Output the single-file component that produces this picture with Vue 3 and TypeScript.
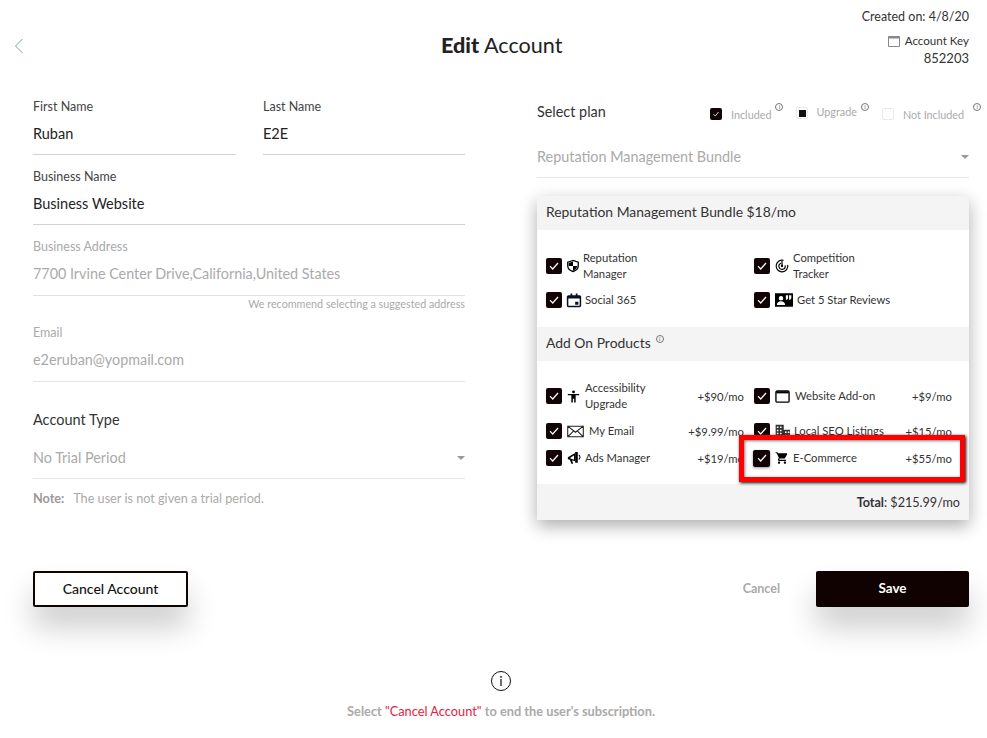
<script setup lang="ts">
type Shape = { d: string; fill?: string; stroke?: string; sw?: number }
type Item = { name: string; lines: string[]; price?: string; gap: number; size: number; icon: Shape[] }

const icons: Record<string, Shape[]> = {
  shield: [
    { d: 'M12 1 1.500 4.500v7c0 5.500 4.500 9.800 10.500 11.500 6-1.700 10.500-6 10.500-11.500v-7z', fill: 'none', stroke: '#000', sw: 2.600 },
    { d: 'M12 3v9H3.500V6zM12 12h8.500c-.3 4.300-3.800 7.800-8.500 9.300z', fill: '#000' },
  ],
  calendar: [
    { d: 'M2.500 5h19a1.500 1.500 0 0 1 1.500 1.500V21.500a1.500 1.500 0 0 1-1.500 1.500h-19A1.500 1.500 0 0 1 1 21.500V6.500A1.500 1.500 0 0 1 2.500 5z', fill: 'none', stroke: '#0a1020', sw: 2.600 },
    { d: 'M1 5h22v4.500H1zM6 1h3v5H6zM15 1h3v5h-3zM14 15h5.500v5H14z', fill: '#0a1020' },
  ],
  radar: [
    { d: 'M14.500 2.300A10 10 0 1 0 21.800 10', fill: 'none', stroke: '#000', sw: 2 },
    { d: 'M10.500 7.200A5.400 5.400 0 1 0 17.300 11', fill: 'none', stroke: '#000', sw: 2 },
    { d: 'M12 3.500v8', fill: 'none', stroke: '#000', sw: 2 },
    { d: 'M12 10a2 2 0 1 1 0 4 2 2 0 0 1 0-4z', fill: '#000' },
  ],
  reviews: [
    { d: 'M0 3h24v18H0z', fill: '#000' },
    { d: 'M8 6.500a3 3 0 1 1 0 6 3 3 0 0 1 0-6zM2.500 18.500c0-3 2.700-4.800 5.500-4.800s5.500 1.800 5.500 4.800zM14.500 5.500h3v4l-1.500 2h-1.500zM18.800 5.500h3v4l-1.500 2h-1.500z', fill: '#fff' },
  ],
  person: [
    { d: 'M12 1a2.600 2.600 0 1 1 0 5.200A2.600 2.600 0 0 1 12 1zM1.500 7.500h21v2.400H16V23h-2.800v-7h-2.400v7H8V9.900H1.500z', fill: '#000' },
  ],
  mail: [
    { d: 'M1 4.500h22v15H1zM1 4.500l11 8.500 11-8.500M1 19.500l8.500-8.500M23 19.500 14.500 11', fill: 'none', stroke: '#222', sw: 1.500 },
  ],
  horn: [
    { d: 'M1.500 10.500 14 3.500v14L1.500 14z', fill: '#000' },
    { d: 'M6 11 12 7.500v7.500L6 13z', fill: '#fff' },
    { d: 'M14 1.500h4.500V20H14zM5 15l2.500 7h3L8.500 15.500z', fill: '#000' },
    { d: 'M20 7c3 1 3 6 0 7', fill: 'none', stroke: '#000', sw: 1.800 },
  ],
  website: [
    { d: 'M3.500 3h17a2 2 0 0 1 2 2v14a2 2 0 0 1-2 2h-17a2 2 0 0 1-2-2V5a2 2 0 0 1 2-2z', fill: 'none', stroke: '#000', sw: 2.200 },
    { d: 'M2 3.500h20V7H2z', fill: '#000' },
  ],
  building: [
    { d: 'M1 1h13v22H1zM14 9h10v14H14z', fill: '#333' },
    { d: 'M3 4h2.500v2.500H3zM8 4h2.500v2.500H8zM3 9h2.500v2.500H3zM8 9h2.500v2.500H8zM3 14h2.500v2.500H3zM8 14h2.500v2.500H8zM3 19h2.500v2.500H3zM8 19h2.500v2.500H8zM16 12h2.500v2.500H16zM20.500 12H23v2.500h-2.500zM16 17h2.500v2.500H16zM20.500 17H23v2.500h-2.500z', fill: '#fff' },
  ],
  cart: [
    { d: 'M7 18c-1.100 0-1.990.900-1.990 2S5.900 22 7 22s2-.900 2-2-.900-2-2-2zM1 2v2h2l3.600 7.590-1.350 2.450c-.160.280-.250.610-.250.960 0 1.100.900 2 2 2h12v-2H7.420c-.140 0-.250-.110-.250-.250l.030-.120.900-1.630h7.450c.750 0 1.410-.410 1.750-1.030l3.580-6.490c.080-.140.120-.310.120-.480 0-.550-.450-1-1-1H5.210l-.940-2H1zm16 16c-1.100 0-1.990.900-1.990 2s.890 2 1.990 2 2-.900 2-2-.900-2-2-2z', fill: '#000' },
  ],
}

const planItems: Item[] = [
  { name: 'rep', lines: ['Reputation', 'Manager'], gap: 4, size: 12, icon: icons.shield },
  { name: 'comp', lines: ['Competition', 'Tracker'], gap: 4, size: 14, icon: icons.radar },
  { name: 'social', lines: ['Social 365'], gap: 4, size: 14, icon: icons.calendar },
  { name: 'stars', lines: ['Get 5 Star Reviews'], gap: 4, size: 18, icon: icons.reviews },
]

const addOnItems: Item[] = [
  { name: 'access', lines: ['Accessibility', 'Upgrade'], price: '+$90/mo', gap: 5, size: 13, icon: icons.person },
  { name: 'web', lines: ['Website Add-on'], price: '+$9/mo', gap: 5, size: 15, icon: icons.website },
  { name: 'mail', lines: ['My Email'], price: '+$9.99/mo', gap: 5, size: 17, icon: icons.mail },
  { name: 'seo', lines: ['Local SEO Listings'], price: '+$15/mo', gap: 4, size: 15, icon: icons.building },
  { name: 'ads', lines: ['Ads Manager'], price: '+$19/mo', gap: 4, size: 14, icon: icons.horn },
  { name: 'ecom', lines: ['E-Commerce'], price: '+$55/mo', gap: 4, size: 14, icon: icons.cart },
]
</script>

<template>
  <div class="page">
    <header class="top">
      <svg class="back" width="10" height="16" viewBox="0 0 10 16">
        <path d="M8.500 1 1.500 8l7 7" fill="none" stroke="#7fa39c" stroke-width="1" />
      </svg>
      <h1 class="title"><b>Edit</b> Account</h1>
      <div class="meta">
        <div class="created">Created on: 4/8/20</div>
        <div class="key">
          <svg width="12" height="11" viewBox="0 0 12 11">
            <path d="M.5.500h11v10H.5z" fill="none" stroke="#888" />
            <path d="M.5.500h11v2H.5z" fill="#888" />
          </svg>
          Account Key
        </div>
        <div class="key-value">852203</div>
      </div>
    </header>

    <main class="columns">
      <section class="left">
        <div class="name-row">
          <div class="field">
            <label>First Name</label>
            <div class="value">Ruban</div>
          </div>
          <div class="field">
            <label>Last Name</label>
            <div class="value">E2E</div>
          </div>
        </div>
        <div class="field">
          <label>Business Name</label>
          <div class="value">Business Website</div>
        </div>
        <div class="field muted">
          <label>Business Address</label>
          <div class="value tall">7700 Irvine Center Drive,California,United States</div>
          <div class="hint">We recommend selecting a suggested address</div>
        </div>
        <div class="field muted email">
          <label>Email</label>
          <div class="value tall">e2eruban@yopmail.com</div>
        </div>
        <div class="type-title">Account Type</div>
        <div class="select">
          <span>No Trial Period</span>
          <i class="caret"></i>
        </div>
        <p class="note"><b>Note:</b> The user is not given a trial period.</p>
      </section>

      <section class="right">
        <div class="plan-head">
          <span class="plan-title">Select plan</span>
          <div class="legend">
            <span class="box on">
              <svg width="8" height="8" viewBox="0 0 8 8"><path d="M1.500 4.200 3.200 6l3.300-4" fill="none" stroke="#fff" stroke-width=".8" /></svg>
            </span>
            <span class="leg-text low">Included</span>
            <i class="mini-info">i</i>
            <span class="box part"><em></em></span>
            <span class="leg-text up">Upgrade</span>
            <i class="mini-info">i</i>
            <span class="box off"></span>
            <span class="leg-text low">Not Included</span>
            <i class="mini-info last">i</i>
          </div>
        </div>
        <div class="select plan-select">
          <span>Reputation Management Bundle</span>
          <i class="caret"></i>
        </div>

        <div class="card">
          <div class="band">Reputation Management Bundle $18/mo</div>
          <div class="grid plan-grid">
            <div v-for="item in planItems" :key="item.name" class="item">
              <span class="check">
                <svg width="10" height="8" viewBox="0 0 10 8"><path d="M1 4.200 3.700 7 9 1" fill="none" stroke="#fff" stroke-width="1.200" /></svg>
              </span>
              <svg class="icon" :width="item.size" :height="item.size" viewBox="0 0 24 24" :style="{ marginRight: item.gap + 'px' }">
                <path v-for="(s, i) in item.icon" :key="i" :d="s.d" :fill="s.fill" :stroke="s.stroke" :stroke-width="s.sw" />
              </svg>
              <span class="label"><span v-for="l in item.lines" :key="l" class="line">{{ l }}</span></span>
            </div>
          </div>
          <div class="band">Add On Products<i class="mini-info band-info">i</i></div>
          <div class="grid addon-grid">
            <div v-for="item in addOnItems" :key="item.name" class="item">
              <span class="check">
                <svg width="10" height="8" viewBox="0 0 10 8"><path d="M1 4.200 3.700 7 9 1" fill="none" stroke="#fff" stroke-width="1.200" /></svg>
              </span>
              <svg class="icon" :width="item.size" :height="item.size" viewBox="0 0 24 24" :style="{ marginRight: item.gap + 'px' }">
                <path v-for="(s, i) in item.icon" :key="i" :d="s.d" :fill="s.fill" :stroke="s.stroke" :stroke-width="s.sw" />
              </svg>
              <span class="label"><span v-for="l in item.lines" :key="l" class="line">{{ l }}</span></span>
              <span class="price">{{ item.price }}</span>
            </div>
          </div>
          <div class="total"><b>Total</b>: $215.99/mo</div>
          <div class="highlight"></div>
        </div>
      </section>
    </main>

    <div class="actions">
      <button class="btn-outline">Cancel Account</button>
      <div class="actions-right">
        <button class="btn-text">Cancel</button>
        <button class="btn-solid">Save</button>
      </div>
    </div>

    <footer class="foot">
      <span class="foot-icon">i</span>
      <p>Select <span class="red">"Cancel Account"</span> to end the user's subscription.</p>
    </footer>
  </div>
</template>

<style>
html, body { margin: 0; background: #fff; }
</style>

<style scoped>
.page {
  width: 987px;
  height: 738px;
  overflow: hidden;
  font-family: Lato, "Liberation Sans", sans-serif;
  color: #333;
  background: #fff;
}
.top {
  display: grid;
  grid-template-columns: 427px auto 1fr;
  align-items: start;
  height: 98px;
  padding: 8px 18px 0 14px;
  box-sizing: border-box;
}
.back { margin-top: 30px; }
.title {
  margin: 22px 0 0;
  font-size: 21.600px;
  line-height: 30px;
  font-weight: 400;
  color: #222;
}
.title b { font-weight: 900; }
.meta { text-align: right; font-size: 12.500px; color: #333; padding-top: 1px; }
.created { line-height: 16px; }
.key {
  margin-top: 8px;
  font-size: 11.600px;
  line-height: 16px;
  display: flex;
  justify-content: flex-end;
  align-items: center;
  gap: 5px;
}
.key-value { font-size: 13px; line-height: 18px; }
.columns {
  display: grid;
  grid-template-columns: 432px 432px;
  column-gap: 72px;
  padding: 0 18px 0 33px;
}
.name-row {
  display: grid;
  grid-template-columns: 203px 202px;
  column-gap: 27px;
}
.left { display: flex; flex-direction: column; }
.field { display: flex; flex-direction: column; margin-bottom: 13px; }
.field label { height: 16px; font-size: 12.500px; line-height: 18px; color: #444; }
.value {
  height: 41px;
  line-height: 40px;
  font-size: 14.500px;
  color: #222;
  border-bottom: 1px solid #ccd2de;
  box-sizing: border-box;
}
.value.tall { height: 42px; }
.muted label, .muted .value { color: #aaa; }
.muted .value { font-size: 14.350px; border-bottom-color: #e2e2e2; }
.hint {
  text-align: right;
  font-size: 10.750px;
  line-height: 16px;
  color: #aaa;
}
.field.muted { margin-bottom: 12px; }
.field.email { margin-bottom: 0; }
.type-title { margin-top: 29px; font-size: 14.500px; line-height: 18px; color: #333; }
.select {
  display: flex;
  align-items: center;
  justify-content: space-between;
  height: 40px;
  margin-top: 10px;
  padding-bottom: 2px;
  font-size: 14.400px;
  color: #aaa;
  border-bottom: 1px solid #e6e6e6;
  box-sizing: border-box;
}
.caret {
  width: 0;
  height: 0;
  border-left: 4.500px solid transparent;
  border-right: 4.500px solid transparent;
  border-top: 4.500px solid #999;
}
.note { margin: 11px 0 0; font-size: 12.670px; line-height: 16px; color: #aaa; }
.note b { font-weight: 700; margin-right: 6px; color: #999; }

.right { display: flex; flex-direction: column; }
.plan-head { display: flex; height: 28px; align-items: flex-start; }
.plan-title { width: 173px; font-size: 14.400px; line-height: 27px; color: #333; flex: none; }
.legend { display: flex; align-items: flex-start; color: #aaa; font-size: 10.800px; padding-top: 2px; }
.box {
  width: 12px;
  height: 12px;
  margin-top: 8px;
  border-radius: 2px;
  box-sizing: border-box;
  display: flex;
  align-items: center;
  justify-content: center;
  flex: none;
}
.box.on { background: #120404; }
.box.part { margin-top: 7px; border: 1px solid #e8e8f0; }
.box.part em { width: 7px; height: 7px; background: #111; display: block; }
.box.off { border: 1px solid #e8e8f0; }
.leg-text { margin: 4px 0 0 9px; line-height: 16px; white-space: nowrap; }
.leg-text.up { margin-left: 8px; }
.leg-text.low { margin-top: 7px; }
.mini-info {
  width: 8px;
  height: 8px;
  margin: 3px 13px 0 4px;
  border: 1px solid #777;
  border-radius: 50%;
  box-sizing: border-box;
  font-size: 6px;
  font-style: normal;
  line-height: 6px;
  text-align: center;
  color: #666;
  flex: none;
}
.mini-info.last { margin-left: 9px; margin-right: 0; }
.plan-select { margin-top: 12px; height: 40px; }
.card {
  position: relative;
  margin-top: 18px;
  height: 324px;
  background: #fff;
  box-shadow: 0 6px 16px rgba(0, 0, 0, 0.32);
  display: flex;
  flex-direction: column;
}
.band {
  height: 34px;
  flex: none;
  display: flex;
  align-items: center;
  padding: 0 0 3px 9px;
  box-sizing: border-box;
  background: #f4f4f4;
  font-size: 13.900px;
  color: #333;
}
.band-info { margin: -8px 0 0 5px; }
.grid {
  display: grid;
  grid-template-columns: 198px 198px;
  column-gap: 10px;
  padding-left: 9px;
  align-items: center;
}
.plan-grid { padding-top: 20px; padding-bottom: 15px; row-gap: 6px; }
.addon-grid { padding-top: 19px; padding-bottom: 14px; row-gap: 3px; }
.addon-grid .item:nth-child(-n+2) { margin-bottom: 4px; }
.item {
  display: flex;
  align-items: center;
  min-height: 24px;
  font-size: 11.250px;
  color: #333;
}
.check {
  width: 16px;
  height: 16px;
  margin-right: 5px;
  border-radius: 2px;
  background: #120404;
  display: flex;
  align-items: center;
  justify-content: center;
  flex: none;
}
.addon-grid .item:last-child .check {
  width: 17px;
  height: 17px;
  margin-left: -1px;
  box-shadow: 0 1px 3px rgba(0, 0, 0, 0.4);
}
.icon { flex: none; overflow: visible; }
.label { display: flex; flex-direction: column; }
.line { line-height: 16px; white-space: nowrap; }
.price { margin-left: auto; white-space: nowrap; }
.total {
  flex: 1;
  display: flex;
  align-items: center;
  justify-content: flex-end;
  padding-right: 9px;
  background: #f4f4f4;
  font-size: 12.600px;
  color: #333;
  white-space: pre;
}
.highlight {
  position: absolute;
  left: 202px;
  top: 239px;
  width: 226px;
  height: 47px;
  border: 5px solid #f00;
  box-sizing: border-box;
  box-shadow: 1px 1px 3px #000, inset 1px 1px 3px rgba(0, 0, 0, 0.5);
  pointer-events: none;
}
.actions {
  display: flex;
  justify-content: space-between;
  align-items: center;
  margin-top: 51px;
  padding: 0 18px 0 33px;
}
.actions-right { display: flex; align-items: center; gap: 36px; }
button { font-family: inherit; cursor: pointer; font-size: 14px; padding: 0 0 2px; }
.btn-outline {
  width: 155px;
  height: 36px;
  border: 2px solid #0f0200;
  border-radius: 2px;
  background: #fff;
  color: #111;
  font-weight: 500;
  box-shadow: 0 20px 30px rgba(0, 0, 0, 0.2);
}
.btn-text {
  border: 0;
  background: none;
  color: #aaa;
  font-weight: 700;
  font-size: 12.500px;
}
.btn-solid {
  width: 153px;
  height: 36px;
  border: 0;
  border-radius: 2px;
  background: #0f0200;
  color: #fff;
  font-weight: 700;
  font-size: 13.500px;
  box-shadow: 0 20px 30px rgba(0, 0, 0, 0.2);
}
.foot {
  display: flex;
  flex-direction: column;
  align-items: center;
  margin-top: 64px;
  padding-left: 15px;
}
.foot-icon {
  width: 20px;
  height: 20px;
  border: 1.500px solid #111;
  border-radius: 50%;
  box-sizing: border-box;
  text-align: center;
  font-size: 14px;
  line-height: 17px;
  color: #111;
}
.foot p {
  margin: 12px 0 0;
  font-size: 12.800px;
  line-height: 16px;
  font-weight: 700;
  color: #aaa;
}
.red { color: #e8213f; font-weight: 400; }
</style>
